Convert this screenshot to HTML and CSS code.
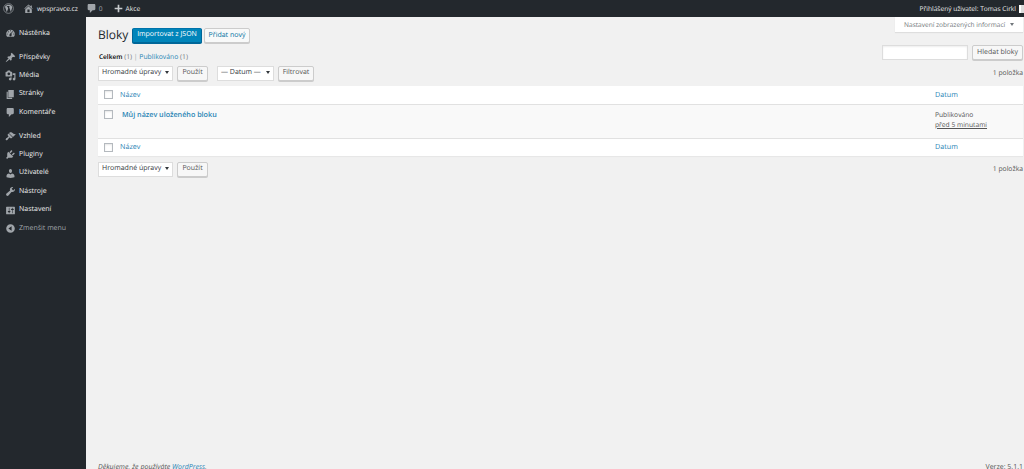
FILE: index.html
```html
<!DOCTYPE html>
<html lang="cs">
<head>
  <meta charset="UTF-8" />
  <title>Bloky</title>
  <link rel="stylesheet" href="styles.css">
</head>
<body>
  <!-- top admin bar -->
  <div class="adminbar">
    <div class="bar-left">
      <svg class="wp-logo" viewBox="0 0 20 20"><circle cx="10" cy="10" r="8.8" fill="none" stroke="currentColor" stroke-width="1.2"/><path d="M3.6 7l3.3 9.6L9.4 9.8 8.3 6.6 7 6.4V5.6h5.2v.8l-1.2.2 3.2 9.6 2.4-7.4c.3-1.4-.2-2.4-1-3.2-2.6-3-8.6-3.6-12 1.4z" fill="currentColor"/></svg>
      <a class="bar-item site"><svg viewBox="0 0 20 20"><path d="M16 8.5l1.53 1.53-1.06 1.06L10 4.62l-6.47 6.47-1.06-1.06L10 2.5l4 4v-2h2v4zm-6-2.46l6 5.99V18H4v-5.97zM12 17v-5H8v5h4z"/></svg>wpspravce.cz</a>
      <a class="bar-item comments"><svg viewBox="0 0 20 20"><path d="M5 2h10c1.1 0 2 .9 2 2v7c0 1.1-.9 2-2 2h-3l-5 5v-5H5c-1.1 0-2-.9-2-2V4c0-1.1.9-2 2-2z"/></svg>0</a>
      <a class="bar-item new"><svg viewBox="0 0 20 20"><path d="M17 8.500v3h-5.500V17h-3v-5.500H3v-3h5.500V3h3v5.500z"/></svg>Akce</a>
    </div>
    <div class="bar-right">
      <span>Přihlášený uživatel: Tomas Cirkl</span>
      <span class="avatar"></span>
    </div>
  </div>

  <div class="layout">
    <!-- side menu -->
    <nav class="sidemenu">
      <a class="menu-item"><svg viewBox="0 0 20 20"><path fill-rule="evenodd" d="M3.76 16h12.48c1.100-1.370 1.760-3.110 1.760-5 0-4.420-3.580-8-8-8s-8 3.580-8 8c0 1.890.66 3.630 1.760 5zM10 4c.55 0 1 .45 1 1s-.45 1-1 1-1-.45-1-1 .45-1 1-1zM6 6c.55 0 1 .45 1 1s-.45 1-1 1-1-.45-1-1 .45-1 1-1zm8 0c.55 0 1 .45 1 1s-.45 1-1 1-1-.45-1-1 .45-1 1-1zm-5.370 5.550L12 7v6c0 1.100-.9 2-2 2s-2-.9-2-2c0-.57.24-1.080.63-1.450zM4 10c.55 0 1 .45 1 1s-.45 1-1 1-1-.45-1-1 .45-1 1-1zm12 0c.55 0 1 .45 1 1s-.45 1-1 1-1-.45-1-1 .45-1 1-1z"/></svg>Nástěnka</a>
      <div class="menu-sep"></div>
      <a class="menu-item"><svg viewBox="0 0 20 20"><path d="M10.440 3.020l1.820-1.820 6.360 6.350-1.830 1.820c-1.050-.68-2.480-.57-3.410.36l-.75.75c-.92.93-1.040 2.350-.35 3.410l-1.830 1.820-2.410-2.410-2.800 2.790c-.42.42-3.380 2.710-3.800 2.290s1.860-3.390 2.280-3.810l2.790-2.790L4.100 9.360l1.830-1.820c1.050.69 2.480.57 3.400-.36l.75-.75c.93-.92 1.050-2.350.36-3.410z"/></svg>Příspěvky</a>
      <a class="menu-item"><svg viewBox="0 0 20 20"><path fill-rule="evenodd" d="M13 11V4c0-.55-.45-1-1-1h-1.670L9 1H5L3.670 3H2c-.55 0-1 .45-1 1v7c0 .55.45 1 1 1h10c.55 0 1-.45 1-1zM7 4.500c1.380 0 2.500 1.120 2.500 2.500S8.380 9.500 7 9.500 4.500 8.380 4.500 7 5.620 4.500 7 4.500zM14 6h5v10.500c0 1.380-1.120 2.500-2.500 2.500S14 17.880 14 16.500s1.120-2.500 2.500-2.500c.17 0 .34.02.5.05V9h-3V6zm-4 8.050V13h2v3.500c0 1.380-1.120 2.500-2.500 2.500S7 17.880 7 16.500 8.120 14 9.500 14c.17 0 .34.02.5.05z"/></svg>Média</a>
      <a class="menu-item"><svg viewBox="0 0 20 20"><path d="M6 15V2h10v13H6zm-1 1h8v2H3V5h2v11z"/></svg>Stránky</a>
      <a class="menu-item"><svg viewBox="0 0 20 20"><path d="M5 2h9c1.100 0 2 .9 2 2v7c0 1.100-.9 2-2 2h-2l-5 5v-5H5c-1.100 0-2-.9-2-2V4c0-1.100.9-2 2-2z"/></svg>Komentáře</a>
      <div class="menu-sep"></div>
      <a class="menu-item"><svg viewBox="0 0 20 20"><path d="M14.480 11.060L7.410 3.990l1.500-1.500c.5-.56 2.300-.47 3.510.32 1.210.8 1.430 1.280 2.910 2.100 1.180.64 2.450 1.260 4.450.85zm-.71.71L6.700 4.700 4.930 6.470c-.39.39-.39 1.020 0 1.410l1.060 1.060c.39.39.39 1.030 0 1.420-.6.6-1.430 1.110-2.210 1.690-.35.26-.7.53-1.010.84-1.340 1.340-2 3-1.300 3.700s2.360.04 3.700-1.300c.31-.31.58-.66.84-1.010.58-.78 1.090-1.610 1.690-2.210.39-.39 1.030-.39 1.420 0l1.060 1.060c.39.39 1.020.39 1.410 0z"/></svg>Vzhled</a>
      <a class="menu-item"><svg viewBox="0 0 20 20"><path d="M13.110 4.360L9.870 7.600 8 5.730l3.240-3.240c.35-.34 1.050-.2 1.560.32.52.51.66 1.210.31 1.550zm-8 1.770l.91-1.120 9.010 9.010-1.190.84c-.71.71-2.630 1.160-3.820 1.160H6.140L4.900 17.260c-.59.59-1.540.59-2.120 0-.59-.58-.59-1.530 0-2.120l1.240-1.240v-3.880c0-1.130.4-3.190 1.090-3.890zm7.260 3.970l3.240-3.240c.34-.35 1.040-.21 1.550.31.52.51.66 1.210.31 1.550l-3.240 3.250z"/></svg>Pluginy</a>
      <a class="menu-item"><svg viewBox="0 0 20 20"><path d="M10 9.250c-2.270 0-2.730-3.440-2.730-3.440C7 4.020 7.820 2 9.970 2c2.160 0 2.980 2.020 2.710 3.810 0 0-.41 3.440-2.680 3.440zm0 2.570L12.720 10c2.390 0 4.520 2.330 4.520 4.530v2.490s-3.650 1.130-7.240 1.130c-3.650 0-7.240-1.130-7.240-1.130v-2.490c0-2.250 1.940-4.480 4.470-4.480z"/></svg>Uživatelé</a>
      <a class="menu-item"><svg viewBox="0 0 20 20"><path d="M16.680 9.770c-1.340 1.340-3.300 1.670-4.950.99l-5.410 6.520c-.99.99-2.590.99-3.580 0s-.99-2.590 0-3.570l6.520-5.420c-.68-1.650-.35-3.610.99-4.950 1.280-1.280 3.120-1.620 4.720-1.060l-2.890 2.890 2.820 2.820 2.860-2.870c.53 1.580.18 3.390-1.080 4.650z"/></svg>Nástroje</a>
      <a class="menu-item"><svg viewBox="0 0 20 20"><path fill-rule="evenodd" d="M18 16V4c0-.55-.45-1-1-1H3c-.55 0-1 .45-1 1v12c0 .55.45 1 1 1h14c.55 0 1-.45 1-1zM8 11h1c.55 0 1 .45 1 1s-.45 1-1 1H8v1.500c0 .28-.22.5-.5.5s-.5-.22-.5-.5V13H6c-.55 0-1-.45-1-1s.45-1 1-1h1V5.500c0-.28.22-.5.5-.5s.5.22.5.5V11zm5-2h-1c-.55 0-1-.45-1-1s.45-1 1-1h1V5.500c0-.28.22-.5.5-.5s.5.22.5.5V7h1c.55 0 1 .45 1 1s-.45 1-1 1h-1v5.500c0 .28-.22.5-.5.5s-.5-.22-.5-.5V9z"/></svg>Nastavení</a>
      <a class="menu-item collapse"><svg viewBox="0 0 20 20"><path fill-rule="evenodd" d="M10 2.160c4.330 0 7.840 3.510 7.840 7.840s-3.510 7.840-7.840 7.840S2.160 14.330 2.160 10 5.710 2.160 10 2.160zm2 11.720V6.120L6.180 9.970z"/></svg>Zmenšit menu</a>
    </nav>

    <main class="content">
      <button class="screen-tab">Nastavení zobrazených informací <i class="arrow"></i></button>

      <div class="page-head">
        <h1>Bloky</h1>
        <a class="btn primary">Importovat z JSON</a>
        <a class="btn outline">Přidat nový</a>
      </div>

      <div class="views-row">
        <div class="views"><b>Celkem</b> <span class="count">(1)</span> <span class="pipe">|</span> <a>Publikováno</a> <span class="count">(1)</span></div>
        <div class="search">
          <input type="text" class="search-input" />
          <a class="btn">Hledat bloky</a>
        </div>
      </div>

      <div class="tablenav">
        <div class="select bulk">Hromadné úpravy <i class="arrow dark"></i></div>
        <a class="btn">Použít</a>
        <div class="select dates">— Datum — <i class="arrow dark"></i></div>
        <a class="btn">Filtrovat</a>
        <span class="num">1 položka</span>
      </div>

      <table class="list">
        <colgroup><col class="col-check"><col><col class="col-date"></colgroup>
        <thead>
          <tr><td><span class="check"></span></td><td><a>Název</a></td><td><a>Datum</a></td></tr>
        </thead>
        <tbody>
          <tr>
            <td><span class="check"></span></td>
            <td class="title"><a>Můj název uloženého bloku</a></td>
            <td class="date">Publikováno<br><u>před 5 minutami</u></td>
          </tr>
        </tbody>
        <tfoot>
          <tr><td><span class="check"></span></td><td><a>Název</a></td><td><a>Datum</a></td></tr>
        </tfoot>
      </table>

      <div class="tablenav bottom">
        <div class="select bulk">Hromadné úpravy <i class="arrow dark"></i></div>
        <a class="btn">Použít</a>
        <span class="num">1 položka</span>
      </div>

      <footer class="foot">
        <em>Děkujeme, že používáte <a>WordPress</a>.</em>
        <span>Verze: 5.1.1</span>
      </footer>
    </main>
  </div>
</body>
</html>
```
FILE: styles.css
```css
* {
  margin: 0;
  padding: 0;
  box-sizing: border-box;
}

html, body {
  height: 469px;
  overflow: hidden;
}

body {
  font-family: "Open Sans", sans-serif;
  font-size: 7px;
  line-height: 1.4;
  color: #555;
  background: #f1f1f1;
  text-rendering: geometricPrecision;
}

a {
  color: #2a85b5;
}

svg {
  fill: currentColor;
  flex: none;
}

/* admin bar */
.adminbar {
  display: flex;
  justify-content: space-between;
  align-items: center;
  height: 17px;
  background: #23282d;
  color: #eee;
  font-size: 6.6px;
  overflow: hidden;
}

.bar-left,
.bar-right,
.bar-item {
  display: flex;
  align-items: center;
}

.bar-left {
  padding-left: 3px;
}

.wp-logo {
  width: 11px;
  height: 11px;
  color: #a0a5aa;
}

.bar-item {
  color: #eee;
}

.bar-item svg {
  width: 11px;
  height: 11px;
  color: #a0a5aa;
}

.site {
  margin-left: 9px;
  gap: 3px;
}

.comments {
  margin-left: 8px;
  gap: 2px;
  color: #a0a5aa;
}

.new {
  margin-left: 10px;
  gap: 2px;
}

.new svg {
  color: #c8cbce;
}

.bar-right {
  gap: 3px;
  margin-right: -3px;
  white-space: nowrap;
}

.avatar {
  width: 8px;
  height: 8px;
  flex: none;
  background: #ddd;
  border-left: 2px solid #fff;
  border-right: 2px solid #8a6a60;
}

/* side menu */
.layout {
  display: flex;
  height: 456px;
}

.sidemenu {
  width: 86px;
  flex: none;
  padding-top: 7.6px;
  background: #23282d;
}

.menu-item {
  display: flex;
  align-items: center;
  gap: 3px;
  height: 18.4px;
  padding-left: 5px;
  color: #eee;
  font-size: 7px;
}

.menu-item svg {
  width: 11px;
  height: 11px;
  color: #a0a5aa;
}

.menu-sep {
  height: 5.4px;
}

.collapse {
  color: #a0a5aa;
}

/* main area */
.content {
  position: relative;
  flex: 1;
  min-width: 0;
  display: flex;
  flex-direction: column;
  padding: 10px 1px 0 12px;
}

.screen-tab {
  position: absolute;
  top: 0;
  right: 1px;
  width: 128px;
  height: 15px;
  background: #fff;
  border: none;
  box-shadow: 0 1px 1px rgba(0, 0, 0, 0.08);
  color: #72777c;
  font: 6.55px/15px "Open Sans", sans-serif;
  text-rendering: geometricPrecision;
}

.arrow {
  display: inline-block;
  margin-left: 3px;
  border-left: 2.5px solid transparent;
  border-right: 2.5px solid transparent;
  border-top: 3.5px solid #72777c;
  vertical-align: 1px;
}

.arrow.dark {
  border-top-color: #32373c;
}

.page-head {
  display: flex;
  align-items: center;
  height: 16px;
}

h1 {
  width: 34px;
  flex: none;
  font-size: 12px;
  font-weight: 400;
  line-height: 16px;
  color: #23282d;
}

.btn {
  display: inline-flex;
  align-items: center;
  justify-content: center;
  height: 15px;
  padding: 0 5px;
  background: #f7f7f7;
  border: 1px solid #ccc;
  border-radius: 2px;
  box-shadow: 0 1px 0 #ccc;
  color: #555;
  white-space: nowrap;
}

.btn.primary {
  background: #0085ba;
  border-color: #0073aa #006799 #006799;
  box-shadow: 0 1px 0 #006799;
  color: #fff;
  width: 70px;
}

.btn.outline {
  margin-left: 2px;
  margin-top: 1px;
  background: #f8f9f9;
  color: #0071a1;
  width: 46px;
}

.views-row {
  display: flex;
  justify-content: space-between;
  height: 20px;
  margin-top: 2px;
}

.views {
  padding-top: 7px;
  padding-left: 1px;
  font-size: 6.8px;
  color: #666;
}

.views b {
  font-size: 6.5px;
  color: #000;
  font-weight: 600;
}

.pipe {
  color: #a0a5aa;
}

.count {
  color: #72777c;
}

.search {
  display: flex;
  gap: 4px;
}

.search-input {
  width: 86px;
  height: 15px;
  background: #fff;
  border: 1px solid #ddd;
  box-shadow: inset 0 1px 2px rgba(0, 0, 0, 0.07);
}

.search .btn {
  width: 51px;
}

.tablenav {
  display: flex;
  align-items: center;
  height: 16px;
}

.select {
  height: 15px;
  display: flex;
  align-items: center;
  justify-content: space-between;
  padding: 0 3px;
  background: #fff;
  border: 1px solid #ddd;
  color: #32373c;
  white-space: nowrap;
}

.select .arrow {
  margin-bottom: 2px;
}

.bulk {
  width: 75px;
  margin-right: 4px;
}

.dates {
  width: 57px;
  margin: 0 4px 0 9px;
}

.tablenav .btn {
  width: 31px;
}

.tablenav .dates + .btn {
  width: 36px;
}

.num {
  margin-left: auto;
  font-size: 6.8px;
  color: #555;
}

.list {
  width: 100%;
  margin-top: 5px;
  table-layout: fixed;
  border-collapse: collapse;
  background: #fff;
  box-shadow: 0 1px 1px rgba(0, 0, 0, 0.04);
}

.col-check {
  width: 22px;
}

.col-date {
  width: 88px;
}

.list td {
  height: 18px;
  vertical-align: middle;
  font-size: 7.2px;
}

.list thead td {
  border-bottom: 1px solid #e1e1e1;
}

.list tfoot td {
  border-top: 1px solid #e1e1e1;
}

.list tbody td {
  height: 34px;
  vertical-align: top;
  padding-top: 5px;
  background: #f9f9f9;
}

.check {
  display: block;
  width: 9px;
  height: 9px;
  margin-left: 6px;
  background: #fff;
  border: 1px solid #b4b9be;
  box-shadow: inset 0 1px 2px rgba(0, 0, 0, 0.1);
}

.list .title {
  padding-left: 2px;
  font-weight: 600;
}

.list .date {
  line-height: 10px;
  font-size: 6.7px;
  color: #555;
}

.tablenav.bottom {
  margin-top: 5px;
}

.foot {
  display: flex;
  justify-content: space-between;
  margin-top: auto;
  color: #555;
}
```
